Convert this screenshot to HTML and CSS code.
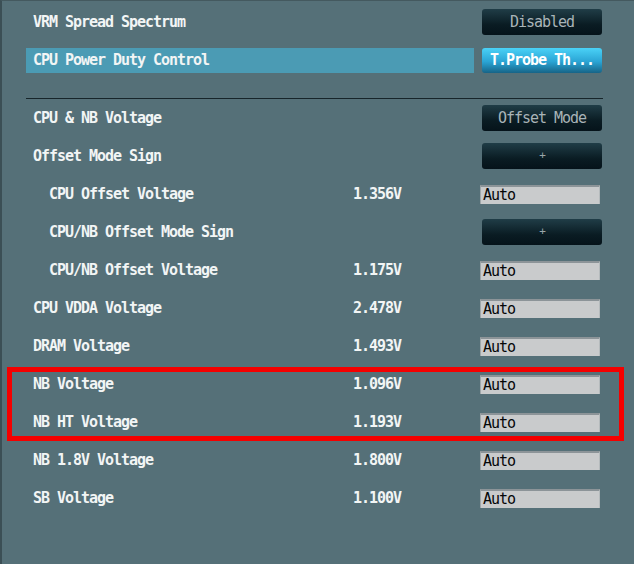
FILE: index.html
```html
<!DOCTYPE html>
<html lang="en">
<head>
    <meta charset="UTF-8">
    <meta name="viewport" content="width=device-width, initial-scale=1.0">
    <title>Ai Tweaker - Voltage</title>
    <link rel="stylesheet" href="styles.css">
</head>
<body>
    <div class="screen">
        <div class="row">
            <div class="label">VRM Spread Spectrum</div>
            <div class="value"></div>
            <div class="control"><span class="btn">Disabled</span></div>
        </div>
        <div class="row selected">
            <div class="label">CPU Power Duty Control</div>
            <div class="control"><span class="btn btn-active">T.Probe Th...</span></div>
        </div>

        <div class="sep"></div>

        <div class="row">
            <div class="label">CPU &amp; NB Voltage</div>
            <div class="value"></div>
            <div class="control"><span class="btn">Offset Mode</span></div>
        </div>
        <div class="row">
            <div class="label">Offset Mode Sign</div>
            <div class="value"></div>
            <div class="control"><span class="btn btn-sign">+</span></div>
        </div>
        <div class="row">
            <div class="label sub">CPU Offset Voltage</div>
            <div class="value">1.356V</div>
            <div class="control"><span class="field">Auto</span></div>
        </div>
        <div class="row">
            <div class="label sub">CPU/NB Offset Mode Sign</div>
            <div class="value"></div>
            <div class="control"><span class="btn btn-sign">+</span></div>
        </div>
        <div class="row">
            <div class="label sub">CPU/NB Offset Voltage</div>
            <div class="value">1.175V</div>
            <div class="control"><span class="field">Auto</span></div>
        </div>
        <div class="row">
            <div class="label">CPU VDDA Voltage</div>
            <div class="value">2.478V</div>
            <div class="control"><span class="field">Auto</span></div>
        </div>
        <div class="row">
            <div class="label">DRAM Voltage</div>
            <div class="value">1.493V</div>
            <div class="control"><span class="field">Auto</span></div>
        </div>

        <div class="marked">
            <div class="row">
                <div class="label">NB Voltage</div>
                <div class="value">1.096V</div>
                <div class="control"><span class="field">Auto</span></div>
            </div>
            <div class="row">
                <div class="label">NB HT Voltage</div>
                <div class="value">1.193V</div>
                <div class="control"><span class="field">Auto</span></div>
            </div>
        </div>

        <div class="row">
            <div class="label">NB 1.8V Voltage</div>
            <div class="value">1.800V</div>
            <div class="control"><span class="field">Auto</span></div>
        </div>
        <div class="row">
            <div class="label">SB Voltage</div>
            <div class="value">1.100V</div>
            <div class="control"><span class="field">Auto</span></div>
        </div>
    </div>
</body>
</html>
```

FILE: styles.css
```css
html, body {
    margin: 0;
    padding: 0;
    background: #557078;
}

body {
    font-family: "DejaVu Sans Mono", "Liberation Mono", monospace;
    font-size: 15px;
    font-weight: bold;
    letter-spacing: -1.03px;
    color: #f2f5f5;
}

.screen {
    height: 564px;
    box-sizing: border-box;
    padding-top: 2px;
    border-top: 1px solid #44595f;
    border-left: 2px solid #3b4f55;
}

.row {
    display: grid;
    grid-template-columns: 327px 127px 122px;
    align-items: center;
    height: 38px;
    margin-left: 24px;
}

.label {
    padding-left: 7px;
    white-space: nowrap;
}

.label.sub {
    padding-left: 23px;
}

.value {
    white-space: nowrap;
}

.selected .label {
    grid-column: 1 / 3;
    height: 25px;
    line-height: 25px;
    margin-top: 1px;
    margin-right: 6px;
    background: #4b9bb4;
}

.control {
    display: flex;
}

.btn {
    width: 120px;
    height: 26px;
    margin-left: 2px;
    line-height: 26px;
    text-align: center;
    border-radius: 3px;
    background: linear-gradient(#203d47, #0a1c23 60%, #05131a);
    color: #a9b4b8;
    font-weight: normal;
}

.btn-active {
    height: 25px;
    line-height: 25px;
    margin-top: 1px;
    background: linear-gradient(#4ad2f7, #2aa4d4 55%, #176487);
    color: #fff;
    font-weight: bold;
}

.btn-sign {
    font-size: 11px;
    color: #9aa6aa;
}

.field {
    width: 120px;
    height: 19px;
    box-sizing: border-box;
    padding-left: 2px;
    line-height: 17px;
    background: #c9cbcc;
    border-top: 2px solid #8c9498;
    border-left: 1px solid #9ea6a9;
    border-right: 1px solid #b4babc;
    color: #050708;
    font-weight: normal;
}

.sep {
    height: 19px;
    margin-left: 24px;
    margin-right: 31px;
    border-bottom: 1px solid #17252a;
}

.marked {
    position: relative;
}

.marked::after {
    content: "";
    position: absolute;
    top: 2px;
    bottom: 0;
    left: 5px;
    right: 10px;
    border: 5px solid #f40000;
    pointer-events: none;
}
```
